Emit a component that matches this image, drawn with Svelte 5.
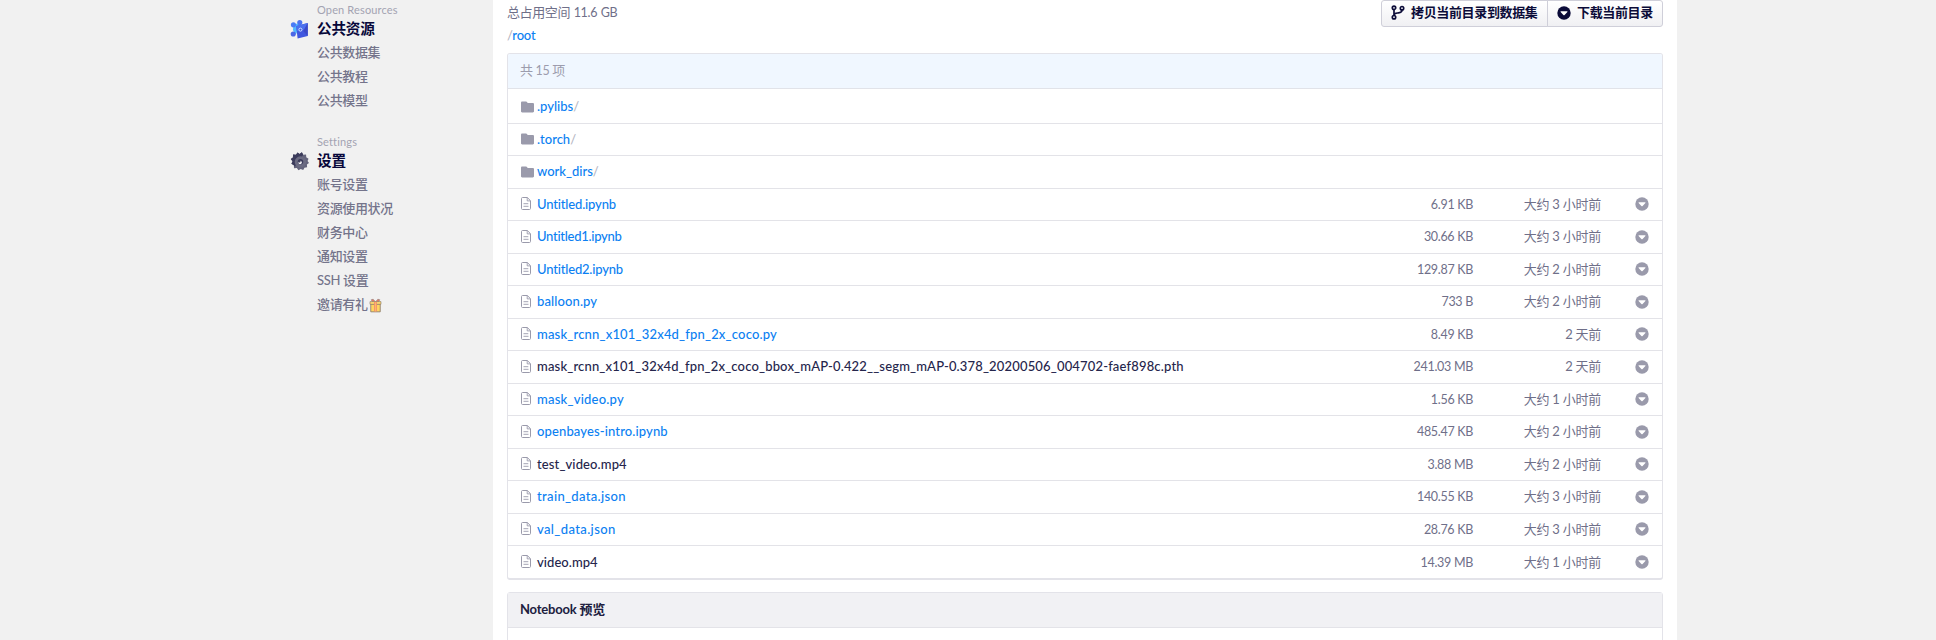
<script>
  const resources = ['公共数据集', '公共教程', '公共模型'];
  const settings = ['账号设置', '资源使用状况', '财务中心', '通知设置', 'SSH 设置'];
  const folders = ['.pylibs', '.torch', 'work_dirs'];
  // tracking is the letter spacing of a file name, in px
  const files = [
    { name: 'Untitled.ipynb', size: '6.91 KB', time: '大约 3 小时前', link: true, tracking: -0.16 },
    { name: 'Untitled1.ipynb', size: '30.66 KB', time: '大约 3 小时前', link: true, tracking: -0.28 },
    { name: 'Untitled2.ipynb', size: '129.87 KB', time: '大约 2 小时前', link: true, tracking: -0.18 },
    { name: 'balloon.py', size: '733 B', time: '大约 2 小时前', link: true, tracking: 0.12 },
    { name: 'mask_rcnn_x101_32x4d_fpn_2x_coco.py', size: '8.49 KB', time: '2 天前', link: true, tracking: 0.18 },
    { name: 'mask_rcnn_x101_32x4d_fpn_2x_coco_bbox_mAP-0.422__segm_mAP-0.378_20200506_004702-faef898c.pth', size: '241.03 MB', time: '2 天前', link: false, tracking: 0.165 },
    { name: 'mask_video.py', size: '1.56 KB', time: '大约 1 小时前', link: true, tracking: 0.22 },
    { name: 'openbayes-intro.ipynb', size: '485.47 KB', time: '大约 2 小时前', link: true, tracking: 0.13 },
    { name: 'test_video.mp4', size: '3.88 MB', time: '大约 2 小时前', link: false, tracking: 0.12 },
    { name: 'train_data.json', size: '140.55 KB', time: '大约 3 小时前', link: true, tracking: 0.34 },
    { name: 'val_data.json', size: '28.76 KB', time: '大约 3 小时前', link: true, tracking: 0.38 },
    { name: 'video.mp4', size: '14.39 MB', time: '大约 1 小时前', link: false, tracking: 0.06 }
  ];
</script>

{#snippet circleDown()}
  <svg class="circle" viewBox="0 0 14 14"><circle cx="7" cy="7" r="6.7" fill="currentColor" /><path d="M3.9 5.3h6.200c.4 0 .5.4.3.7L7.6 9a.8.8 0 0 1-1.200 0L3.600 6c-.2-.3-.1-.7.3-.7z" fill="#fff" /></svg>
{/snippet}

<div class="page">
  <aside>
    <section>
      <div class="label">Open Resources</div>
      <div class="title">
        <svg class="nav-icon" viewBox="0 0 20 20">
          <path d="M4 5l6-1 2 3-4 5-2 4-3-5z" fill="#51b8ff" />
          <circle cx="3.600" cy="5.600" r="2.700" fill="#4a7bf5" /><circle cx="10.300" cy="3.100" r="2.700" fill="#4b73ef" />
          <circle cx="3.400" cy="15.200" r="2.700" fill="#4b66e6" />
          <path d="M6.500 6.800L18.700 3.800V17.300L8 20z" fill="#4057df" /><path d="M6.500 6.800L18.700 3.800 15 10.500 7 12z" fill="#4b6fee" /><path d="M18.700 3.800v13.500L14 12z" fill="#3a49c8" />
          <circle cx="11" cy="10.700" r="1.600" fill="#4057df" stroke="#d5e6ff" stroke-width="1" />
        </svg>
        公共资源
      </div>
      {#each resources as item}<a class="item" href="#top">{item}</a>{/each}
    </section>
    <section>
      <div class="label">Settings</div>
      <div class="title">
        <svg class="nav-icon" viewBox="0 0 20 20">
          <path d="M8 1l2 1.700L12.500.800l1.400 2.500 3-.2.2 3 2.400 1.500-1 2.400L20 12l-2.200 1.600.2 3-2.800.5-1.300 2.400-2.600-1.100-2.400 1.300-1.700-2.300-3 .2-.1-3L1.500 13l1.200-2.700L.800 8l2.300-1.800.1-3 3 .3z" fill="#64647c" />
          <path d="M8 1l2 1.700L12.500.800l1.400 2.500L5 16 4 14.600 1.500 13l1.200-2.700L.800 8l2.300-1.800.1-3 3 .3z" fill="#3c3c5c" />
          <circle cx="11" cy="11" r="6" fill="#6b6b82" /><circle cx="11" cy="10.700" r="2.900" fill="#3c3c5c" /><circle cx="10.600" cy="11.500" r="1.800" fill="#fff" /><circle cx="9.800" cy="10.400" r="1.300" fill="#3c3c5c" />
        </svg>
        设置
      </div>
      {#each settings as item}<a class="item" href="#top">{item}</a>{/each}
      <a class="item" href="#top">邀请有礼<svg class="gift" viewBox="0 0 14 15">
          <path d="M6.800 3.500L4.500.800 2.500 1.200l1 2.300zM7.200 3.500L9.500.800l2 .4-1 2.300z" fill="#ee7d68" stroke="#806e6a" stroke-width=".6" />
          <path d="M1.900 6h10.200v8.300H1.900z" fill="#ffd45f" stroke="#897a69" stroke-width=".9" /><path d="M1.100 3.300h11.800v2.900H1.100z" fill="#ffdb70" stroke="#897a69" stroke-width=".7" />
          <path d="M5.500 3.600h3v10.300h-3z" fill="#f48c72" /><path d="M6.700 4h.7v9.800h-.7z" fill="#ffd45f" />
        </svg></a>
    </section>
  </aside>

  <main>
    <div class="toolbar">
      <span class="usage">总占用空间 <em>11.6 GB</em></span>
      <div class="buttons">
        <button>
          <svg class="branch" viewBox="0 0 14 15" fill="none" stroke="currentColor" stroke-width="1.700"><circle cx="3" cy="2.800" r="1.700" /><circle cx="3" cy="12.200" r="1.700" /><circle cx="11" cy="3.200" r="1.700" /><path d="M3 4.500v6M11 5c0 3-2 2.700-4.500 3C4.500 8.200 3 8.700 3 10.500" /></svg>
          <b>拷贝当前目录到数据集</b>
        </button>
        <button>{@render circleDown()}<b>下载当前目录</b></button>
      </div>
    </div>
    <div class="path"><i>/</i><a href="#top">root</a></div>

    <div class="table">
      <div class="count">共 <em>15</em> 项</div>
      {#each folders as folder}
        <div class="row">
          <svg class="folder" viewBox="0 0 13 12"><path d="M1.200.500h3.600c.4 0 .7.1 1 .4L6.800 2h5c.7 0 1.200.500 1.200 1.200v7.100c0 .7-.5 1.200-1.200 1.200H1.200C.500 11.500 0 11 0 10.300V1.700C0 1 .500.500 1.200.500z" fill="#9a9aab" /></svg>
          <span class="name"><a href="#top">{folder}</a><i>/</i></span>
        </div>
      {/each}
      {#each files as file}
        <div class="row">
          <svg class="doc" viewBox="0 0 10 13" fill="none" stroke="#9a9aab"><path d="M1.500.500h4.800l3.200 3.200v7.800c0 .6-.4 1-1 1h-7c-.6 0-1-.4-1-1v-10c0-.6.4-1 1-1z" /><path d="M6.200.700v3.200h3.200M2.500 6.700h4.800M2.500 9.300h5" stroke-width=".9" /></svg>
          <span class="name" class:plain={!file.link}><a href="#top" style="letter-spacing: {file.tracking}px">{file.name}</a></span>
          <span class="size">{file.size}</span>
          <span class="time">{file.time}</span>
          <span class="action">{@render circleDown()}</span>
        </div>
      {/each}
    </div>

    <div class="preview"><h2>Notebook 预览</h2></div>
  </main>
</div>

<style>
  :global(body) { background: #f1f1f1; overflow: hidden; }
  .page { display: flex; width: 1418px; height: 640px; margin: 0 auto; overflow: hidden; box-sizing: border-box; font: 13px/19.5px Lato, "Noto Sans CJK SC", sans-serif; color: #6f6f89; }
  a { color: #0c7ff2; text-decoration: none; }
  i { font-style: normal; color: #b5b5c2; }
  em { font-style: normal; font-size: 12.5px; letter-spacing: -.3px; }
  aside { width: 203px; flex: none; padding: 2px 0 0 31px; }
  section { margin-bottom: 21px; }
  .label { height: 15px; padding-left: 27px; font-size: 11px; line-height: 15px; color: #a3a3b2; letter-spacing: .15px; }
  .title { display: flex; align-items: center; gap: 8px; height: 23px; margin-bottom: 1px; font-size: 14.6px; font-weight: 700; color: #07073a; letter-spacing: -.2px; }
  .nav-icon { width: 19px; height: 20px; }
  .item { display: flex; align-items: center; height: 24px; padding-left: 27px; font-weight: 500; color: #74748b; letter-spacing: -.35px; }
  .gift { width: 13px; height: 15px; margin: 1px 0 0 1px; }
  main { width: 1156px; padding: 0 14px; background: #fff; }
  .toolbar { display: flex; justify-content: space-between; height: 27px; }
  .usage { padding-top: 3px; letter-spacing: -.4px; word-spacing: .7px; }
  .buttons { display: flex; height: 27px; width: 282px; }
  button { display: flex; align-items: center; box-sizing: border-box; height: 27px; margin: 0; padding: 0 9px 2px; border: 1px solid #cfcfd9; background: linear-gradient(#fff, #f0f0f3); color: #0b0b38; font: inherit; white-space: nowrap; }
  button:first-child { width: 167px; gap: 6px; border-radius: 3px 0 0 3px; }
  button:last-child { width: 116px; gap: 6px; margin-left: -1px; border-radius: 0 3px 3px 0; }
  button b { letter-spacing: -.35px; }
  .branch { width: 14px; height: 15px; flex: none; }
  .circle { width: 14px; height: 14px; display: block; flex: none; }
  .path { height: 26px; line-height: 17px; font-weight: 500; letter-spacing: -.2px; }
  .table { box-sizing: border-box; height: 527px; border: 1px solid #e3e3e9; border-bottom-width: 2px; border-radius: 3px; overflow: hidden; }
  .count { height: 34px; line-height: 33px; padding-left: 12px; border-bottom: 1px solid #e1e3e9; background: #f0f7ff; color: #9c9cad; letter-spacing: -.4px; }
  .row { display: flex; align-items: center; box-sizing: border-box; height: 32.5px; padding: 0 13px; border-bottom: 1px solid #e3e3e8; }
  .count + .row { height: 34.5px; padding-top: 2px; }
  .row:last-child { border-bottom: 0; }
  .folder { width: 13px; height: 12px; margin-right: 3px; }
  .doc { width: 10px; height: 13px; margin: 0 6px 1px 0; }
  .name { flex: 1; font-weight: 500; white-space: nowrap; }
  .plain a { color: #25254c; }
  .size { width: 120px; text-align: right; font-size: 12.5px; letter-spacing: -.3px; }
  .time { width: 128px; text-align: right; letter-spacing: -.25px; }
  .action { width: 48px; color: #9a9aab; display: flex; justify-content: flex-end; }
  .preview { height: 60px; margin-top: 12px; border: 1px solid #e3e3e9; border-radius: 3px 3px 0 0; }
  h2 { margin: 0; height: 34px; line-height: 33px; padding-left: 12px; font-size: 13px; font-weight: 700; letter-spacing: -.2px; color: #20203f; background: #f1f1f4; border-bottom: 1px solid #e3e3e8; }
</style>
